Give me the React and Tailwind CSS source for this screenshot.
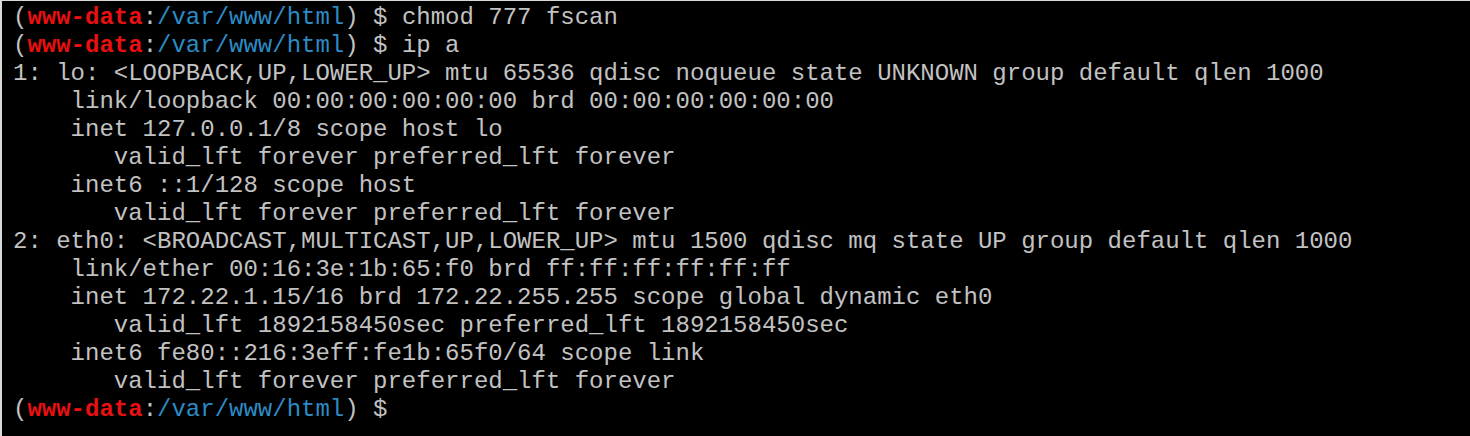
export default function App() {
  const P = () => (
    <>
      (<span className="font-bold text-[#e81010]">www-data</span>:<span className="text-[#2d8bc4]">/var/www/html</span>) $
    </>
  );
  const lines = [
    "1: lo: <LOOPBACK,UP,LOWER_UP> mtu 65536 qdisc noqueue state UNKNOWN group default qlen 1000",
    "    link/loopback 00:00:00:00:00:00 brd 00:00:00:00:00:00",
    "    inet 127.0.0.1/8 scope host lo",
    "       valid_lft forever preferred_lft forever",
    "    inet6 ::1/128 scope host",
    "       valid_lft forever preferred_lft forever",
    "2: eth0: <BROADCAST,MULTICAST,UP,LOWER_UP> mtu 1500 qdisc mq state UP group default qlen 1000",
    "    link/ether 00:16:3e:1b:65:f0 brd ff:ff:ff:ff:ff:ff",
    "    inet 172.22.1.15/16 brd 172.22.255.255 scope global dynamic eth0",
    "       valid_lft 1892158450sec preferred_lft 1892158450sec",
    "    inet6 fe80::216:3eff:fe1b:65f0/64 scope link",
    "       valid_lft forever preferred_lft forever",
  ];
  return (
    <div className="w-[1470px] h-[436px] bg-black border-l-2 border-t border-[#d9d9d9] pl-[11px] pt-[3px] overflow-hidden">
      <pre className="font-['Liberation_Mono','Courier_New',monospace] text-[24px] leading-[28px] text-[#c2c2c2] whitespace-pre m-0">
        <div><P /> chmod 777 fscan</div>
        <div><P /> ip a</div>
        {lines.map((l, i) => (
          <div key={i}>{l}</div>
        ))}
        <div><P /></div>
      </pre>
    </div>
  );
}
